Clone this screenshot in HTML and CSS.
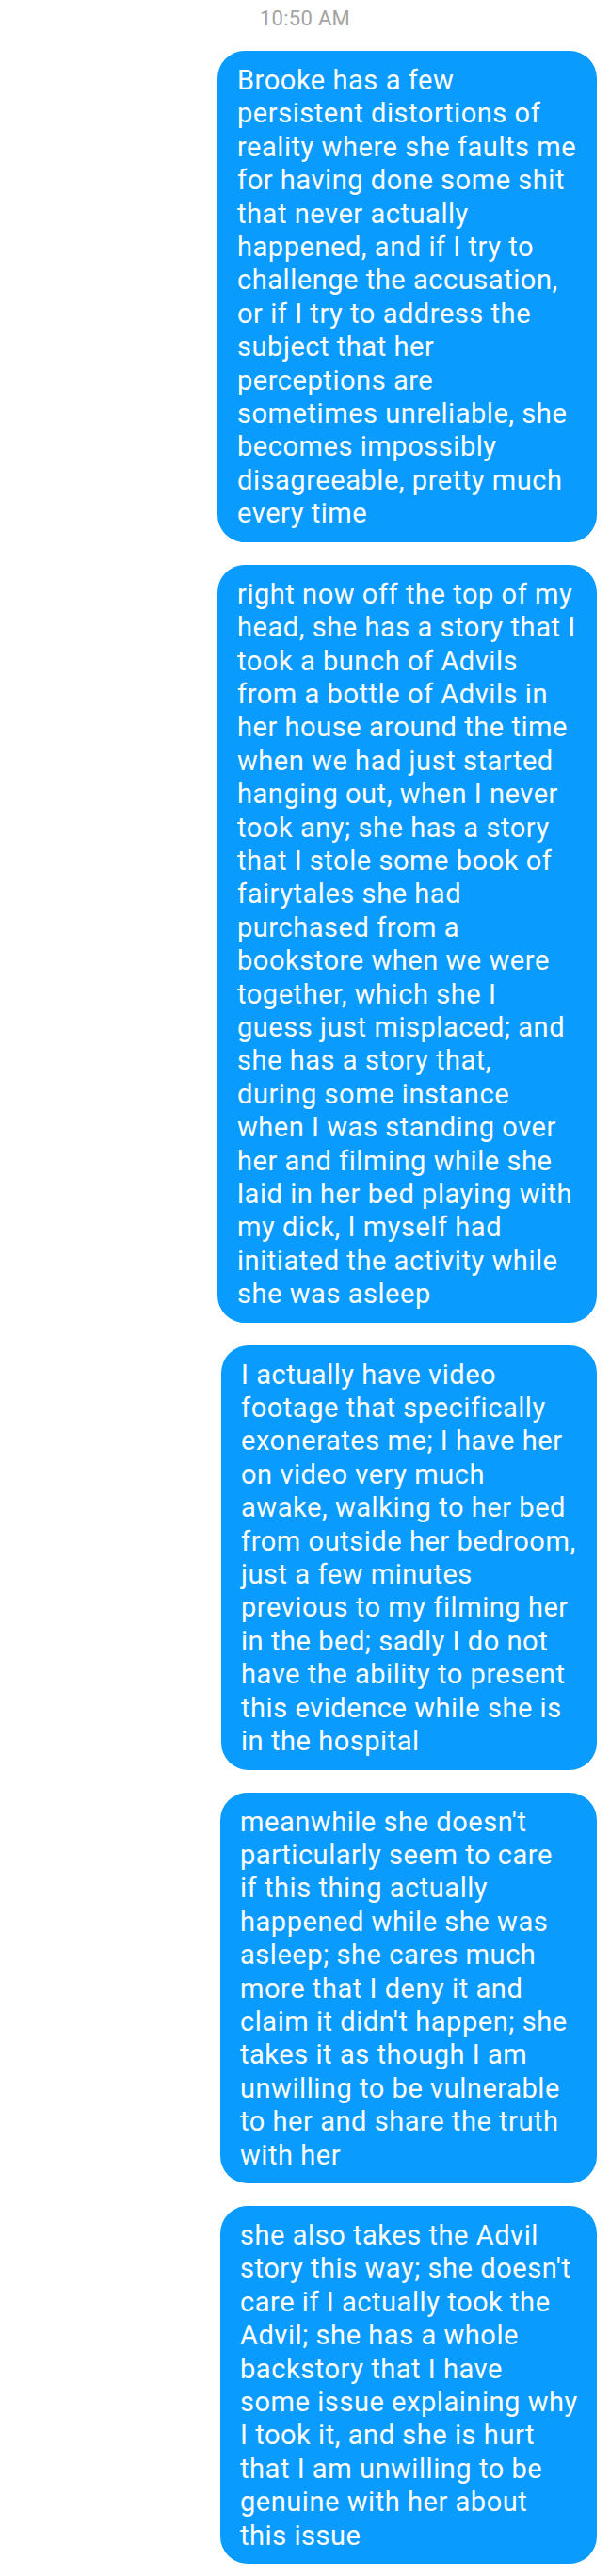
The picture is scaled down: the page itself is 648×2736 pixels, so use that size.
FILE: index.html
```html
<!DOCTYPE html>
<html lang="en">
<head>
<meta charset="utf-8">
<title>Messages</title>
<link rel="stylesheet" href="styles.css">
</head>
<body>
<main class="thread">
  <div class="timestamp">10:50 AM</div>
  <div class="bubble bubble--wide">Brooke has a few<br>persistent distortions of<br>reality where she faults me<br>for having done some shit<br>that never actually<br>happened, and if I try to<br>challenge the accusation,<br>or if I try to address the<br>subject that her<br>perceptions are<br>sometimes unreliable, she<br>becomes impossibly<br>disagreeable, pretty much<br>every time</div>
  <div class="bubble bubble--wide">right now off the top of my<br>head, she has a story that I<br>took a bunch of Advils<br>from a bottle of Advils in<br>her house around the time<br>when we had just started<br>hanging out, when I never<br>took any; she has a story<br>that I stole some book of<br>fairytales she had<br>purchased from a<br>bookstore when we were<br>together, which she I<br>guess just misplaced; and<br>she has a story that,<br>during some instance<br>when I was standing over<br>her and filming while she<br>laid in her bed playing with<br>my dick, I myself had<br>initiated the activity while<br>she was asleep</div>
  <div class="bubble bubble--narrow">I actually have video<br>footage that specifically<br>exonerates me; I have her<br>on video very much<br>awake, walking to her bed<br>from outside her bedroom,<br>just a few minutes<br>previous to my filming her<br>in the bed; sadly I do not<br>have the ability to present<br>this evidence while she is<br>in the hospital</div>
  <div class="bubble bubble--mid">meanwhile she doesn't<br>particularly seem to care<br>if this thing actually<br>happened while she was<br>asleep; she cares much<br>more that I deny it and<br>claim it didn't happen; she<br>takes it as though I am<br>unwilling to be vulnerable<br>to her and share the truth<br>with her</div>
  <div class="bubble bubble--mid">she also takes the Advil<br>story this way; she doesn't<br>care if I actually took the<br>Advil; she has a whole<br>backstory that I have<br>some issue explaining why<br>I took it, and she is hurt<br>that I am unwilling to be<br>genuine with her about<br>this issue</div>
</main>
</body>
</html>
```

FILE: styles.css
```css
html, body {
  margin: 0;
  padding: 0;
  background: #ffffff;
}

body {
  font-family: Roboto, "Noto Sans", "Liberation Sans", sans-serif;
  width: 648px;
}

.thread {
  display: flex;
  flex-direction: column;
  align-items: flex-end;
  gap: 24px;
  padding: 0 14px 14px 0;
}

.timestamp {
  align-self: stretch;
  text-align: center;
  padding: 8px 0 0 14px;
  margin-bottom: -2px;
  font-size: 22px;
  line-height: 24px;
  letter-spacing: 0.3px;
  color: #a3a3a3;
}

.bubble {
  box-sizing: border-box;
  background: #0a9bff;
  color: #ffffff;
  border-radius: 29px;
  padding: 14px 12px 12px 21px;
  font-size: 29px;
  letter-spacing: 0.55px;
  line-height: 35.4px;
  white-space: nowrap;
}

.bubble--wide {
  width: 403px;
}

.bubble--narrow {
  width: 399px;
}

.bubble--mid {
  width: 400px;
}
```
